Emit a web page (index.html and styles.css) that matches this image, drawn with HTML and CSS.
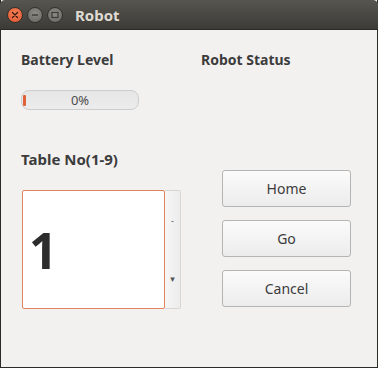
FILE: index.html
```
<!DOCTYPE html>
<html lang="en">
<head>
  <meta charset="UTF-8">
  <title>Robot</title>
  <link rel="stylesheet" href="styles.css">
</head>
<body>
  <div class="window">
    <div class="titlebar">
      <div class="controls">
        <span class="ctl close">
          <svg width="8" height="8" viewBox="0 0 8 8"><path d="M1.5 1.5 L6.5 6.5 M6.5 1.5 L1.5 6.5" stroke="#3a1a10" stroke-width="1.4" stroke-linecap="round"/></svg>
        </span>
        <span class="ctl">
          <svg width="8" height="8" viewBox="0 0 8 8"><path d="M1 4 H7" stroke="#3c3b37" stroke-width="1.4"/></svg>
        </span>
        <span class="ctl">
          <svg width="8" height="8" viewBox="0 0 8 8"><rect x="1" y="1.5" width="6" height="5" fill="none" stroke="#3c3b37" stroke-width="1.2"/></svg>
        </span>
      </div>
      <span class="title">Robot</span>
    </div>

    <div class="content">
      <div class="status-row">
        <div class="battery">
          <h4>Battery Level</h4>
          <div class="progress">
            <span class="progress-fill"></span>
            <span class="progress-text">0%</span>
          </div>
        </div>
        <div class="robot-status">
          <h4>Robot Status</h4>
        </div>
      </div>

      <h3 class="table-label">Table No(1-9)</h3>

      <div class="control-row">
        <div class="spinbox">
          <div class="spin-value">1</div>
          <div class="spin-buttons">
            <span class="spin-up">-</span>
            <span class="spin-down">&#9662;</span>
          </div>
        </div>
        <div class="actions">
          <button class="action-button">Home</button>
          <button class="action-button">Go</button>
          <button class="action-button">Cancel</button>
        </div>
      </div>
    </div>
  </div>
</body>
</html>
```

FILE: styles.css
```
* {
  box-sizing: border-box;
}

body {
  margin: 0;
  font-family: 'Noto Sans', 'DejaVu Sans', sans-serif;
  background: #f2f1f0;
}

.window {
  width: 378px;
  height: 368px;
  border: 1px solid #2b2a27;
  border-top: none;
  background: #f2f1f0;
  display: flex;
  flex-direction: column;
}

.titlebar {
  height: 30px;
  margin: 0 -1px;
  background: linear-gradient(to bottom, #56554f, #3c3b37);
  border-radius: 5px 5px 0 0;
  border-bottom: 1px solid #2b2a27;
  display: flex;
  align-items: center;
  padding-left: 7px;
}

.controls {
  display: flex;
  gap: 4px;
}

.ctl {
  width: 16px;
  height: 16px;
  border-radius: 50%;
  background: radial-gradient(circle at 50% 40%, #8d8c86, #65645f);
  border: 1px solid #34332f;
  display: flex;
  align-items: center;
  justify-content: center;
}

.ctl.close {
  background: radial-gradient(circle at 50% 40%, #f6865a, #e1502a);
}

.title {
  margin-left: 12px;
  color: #dfdbd2;
  font-weight: bold;
  font-size: 15px;
}

.content {
  padding: 20px 0 0 20px;
}

.status-row {
  display: flex;
}

.battery {
  width: 180px;
}

h4 {
  margin: 0;
  font-size: 14px;
  font-weight: bold;
  color: #3c3c3c;
}

.progress {
  margin-top: 21px;
  width: 118px;
  height: 20px;
  border: 1px solid #cdcdcd;
  border-radius: 8px;
  background: linear-gradient(to bottom, #e6e6e6, #ececec);
  display: flex;
  align-items: center;
  position: relative;
}

.progress-fill {
  position: absolute;
  left: 1px;
  top: 4px;
  width: 3px;
  height: 11px;
  background: #e0603a;
  border-radius: 1px;
}

.progress-text {
  flex: 1;
  text-align: center;
  font-size: 13px;
  color: #4c4c4c;
}

.table-label {
  margin: 39px 0 0;
  font-size: 15px;
  font-weight: bold;
  color: #3c3c3c;
}

.control-row {
  display: flex;
  margin-top: 1px;
}

.spinbox {
  margin-top: 20px;
  margin-left: 1px;
  width: 159px;
  height: 119px;
  display: flex;
}

.spin-value {
  flex: 1;
  background: #fff;
  border: 1px solid #e0845f;
  border-radius: 2px;
  display: flex;
  align-items: center;
  padding-left: 6px;
  font-size: 50px;
  font-weight: bold;
  color: #2d2d2d;
}

.spin-buttons {
  width: 16px;
  background: linear-gradient(to right, #f6f6f6, #ececec);
  border: 1px solid #d6d6d6;
  border-left: none;
  border-radius: 0 2px 2px 0;
  display: flex;
  flex-direction: column;
  justify-content: space-around;
  align-items: center;
  font-size: 9px;
  color: #555;
}

.actions {
  margin-left: 41px;
  display: flex;
  flex-direction: column;
  gap: 13px;
}

.action-button {
  width: 129px;
  height: 37px;
  font-family: inherit;
  font-size: 14px;
  color: #3c3c3c;
  background: linear-gradient(to bottom, #fbfbfb, #ececec);
  border: 1px solid #b4b4b4;
  border-radius: 3px;
  cursor: pointer;
}
```
